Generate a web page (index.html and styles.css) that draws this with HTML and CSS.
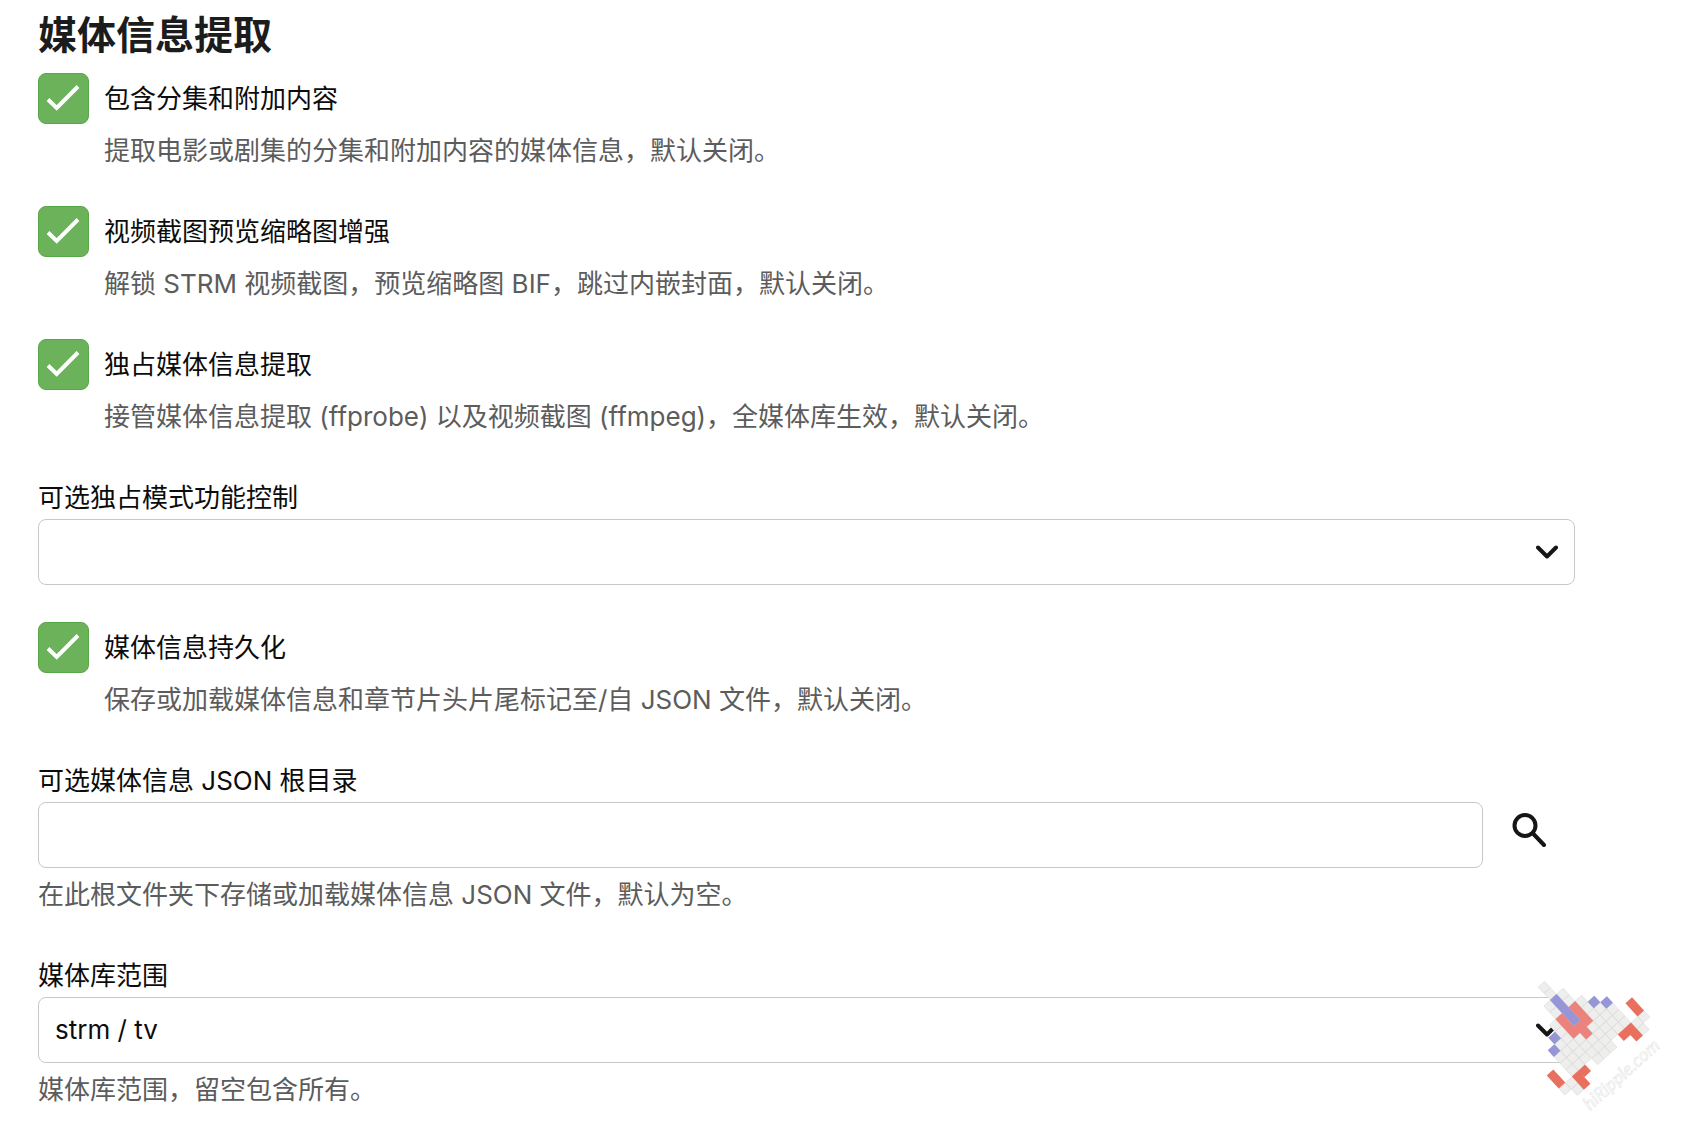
FILE: index.html
```html
<!DOCTYPE html>
<html lang="zh-CN">
<head>
<meta charset="utf-8">
<meta name="viewport" content="width=device-width, initial-scale=1">
<title>媒体信息提取</title>
<link rel="stylesheet" href="styles.css">
</head>
<body>
<main class="page">
  <form class="settings">
    <h1 class="title">媒体信息提取</h1>

    <div class="option">
      <label class="option-row">
        <span class="check">
          <input class="check-input" type="checkbox" checked aria-describedby="d1">
          <svg class="check-mark" viewBox="0 0 51 51" aria-hidden="true"><path d="M10 26.5 18.7 35 40 13.5"/></svg>
        </span>
        <span>包含分集和附加内容</span>
      </label>
      <p class="help" id="d1">提取电影或剧集的分集和附加内容的媒体信息，默认关闭。</p>
    </div>

    <div class="option">
      <label class="option-row">
        <span class="check">
          <input class="check-input" type="checkbox" checked aria-describedby="d2">
          <svg class="check-mark" viewBox="0 0 51 51" aria-hidden="true"><path d="M10 26.5 18.7 35 40 13.5"/></svg>
        </span>
        <span>视频截图预览缩略图增强</span>
      </label>
      <p class="help" id="d2">解锁 STRM 视频截图，预览缩略图 BIF，跳过内嵌封面，默认关闭。</p>
    </div>

    <div class="option">
      <label class="option-row">
        <span class="check">
          <input class="check-input" type="checkbox" checked aria-describedby="d3">
          <svg class="check-mark" viewBox="0 0 51 51" aria-hidden="true"><path d="M10 26.5 18.7 35 40 13.5"/></svg>
        </span>
        <span>独占媒体信息提取</span>
      </label>
      <p class="help" id="d3">接管媒体信息提取 (ffprobe) 以及视频截图 (ffmpeg)，全媒体库生效，默认关闭。</p>
    </div>

    <div class="field">
      <label class="field-label" for="mode">可选独占模式功能控制</label>
      <div class="select">
        <select class="control" id="mode"><option value=""></option></select>
        <svg class="chevron" viewBox="0 0 22 14" aria-hidden="true"><path d="M2 2.5 11 11.5 20 2.5"/></svg>
      </div>
    </div>

    <div class="option">
      <label class="option-row">
        <span class="check">
          <input class="check-input" type="checkbox" checked aria-describedby="d4">
          <svg class="check-mark" viewBox="0 0 51 51" aria-hidden="true"><path d="M10 26.5 18.7 35 40 13.5"/></svg>
        </span>
        <span>媒体信息持久化</span>
      </label>
      <p class="help" id="d4">保存或加载媒体信息和章节片头片尾标记至/自 JSON 文件，默认关闭。</p>
    </div>

    <div class="field">
      <label class="field-label" for="root">可选媒体信息 JSON 根目录</label>
      <div class="path">
        <input class="control" id="root" type="text" aria-describedby="d5">
        <button class="browse" type="button" aria-label="浏览">
          <svg class="browse-icon" viewBox="0 0 34 34" aria-hidden="true"><circle cx="13" cy="12.5" r="10.5"/><path d="M21 20.5 32 32"/></svg>
        </button>
      </div>
      <p class="help" id="d5">在此根文件夹下存储或加载媒体信息 JSON 文件，默认为空。</p>
    </div>

    <div class="field">
      <label class="field-label" for="scope">媒体库范围</label>
      <div class="select">
        <select class="control" id="scope" aria-describedby="d6"><option>strm / tv</option></select>
        <svg class="chevron" viewBox="0 0 22 14" aria-hidden="true"><path d="M2 2.5 11 11.5 20 2.5"/></svg>
      </div>
      <p class="help" id="d6">媒体库范围，留空包含所有。</p>
    </div>
  </form>

  <svg class="watermark" viewBox="0 0 188 176">
    <defs>
      <path id="tiles" d="M-2.5 0h11M-.5 1h9M-.5-1h9M1.5 2h6M1.5-2h6M2.5 3h5M2.5-3h5M3.5 4h4M3.5-4h4M7.5 5h2M7.5-5h2M7.5 6h1M7.5-6h1"/>
    </defs>
    <!-- one unit per tile; tile (0,0) is the first of the blue strip -->
    <g class="mark" transform="translate(56.3 40.3) rotate(47.5) scale(8.9)">
      <use class="tile-lines" href="#tiles"/>
      <use class="tile-faces" href="#tiles"/>
      <path class="tile-rose" d="M1.5 1h3M1.5-1h3M3.5 0h2"/>
      <path class="tile-red" d="M5.5 6h2M5.5-6h2M7.5 3h1M7.5-3h1M7.5 4h2M7.5-4h2"/>
      <path class="tile-blue" d="M-.5 0h4M2.5 3h1M2.5-3h1M3.5 4h1M3.5-4h1"/>
    </g>
    <text class="mark-text" transform="translate(90 151) rotate(-42)">hiRipple.com</text>
  </svg>
</main>
</body>
</html>
```
FILE: styles.css
```css
* {
  box-sizing: border-box;
}

body {
  margin: 0;
  background: #fff;
  color: #0c0c0c;
  font: 26px/36px Inter, "Noto Sans CJK SC", sans-serif;
}

.page {
  position: relative;
  padding: 5px 113px 28px 38px;
}

.settings {
  display: flex;
  flex-direction: column;
  gap: 37px;
}

.title {
  margin: 0 0 -29px;
  color: #1c1c1c;
  font-size: 39px;
  font-weight: 700;
  line-height: 60px;
}

.option-row {
  display: flex;
  align-items: center;
  gap: 15px;
}

.option .help {
  margin-left: 66px;
}

.check {
  display: grid;
  flex: none;
}

.check-input,
.check-mark {
  grid-area: 1 / 1;
  width: 51px;
  height: 51px;
  margin: 0;
}

.check-input {
  appearance: none;
  border: 1px solid #58a846;
  border-radius: 8px;
  background: #6bb25a;
}

.check-mark {
  fill: none;
  stroke: #fff;
  stroke-width: 4;
  pointer-events: none;
}

.help {
  margin: 9px 0 0;
  color: #5c5c5c;
}

.field-label {
  display: block;
  padding: 8px 0 3px;
}

.select {
  display: grid;
  align-items: center;
}

.select .control,
.chevron {
  grid-area: 1 / 1;
}

.control {
  appearance: none;
  width: 100%;
  height: 66px;
  padding: 0 16px;
  border: 1px solid #c8c8c8;
  border-radius: 8px;
  background: #fff;
  color: inherit;
  font: inherit;
}

.chevron {
  justify-self: end;
  width: 22px;
  height: 14px;
  margin-right: 17px;
  fill: none;
  stroke: #161616;
  stroke-width: 4;
  stroke-linecap: round;
  stroke-linejoin: round;
  pointer-events: none;
}

.path {
  display: flex;
  align-items: flex-start;
}

.path .control {
  flex: 1;
  min-width: 0;
}

.browse {
  display: grid;
  place-items: center;
  width: 92px;
  height: 55px;
  padding: 0;
  border: 0;
  background: none;
}

.browse-icon {
  width: 34px;
  height: 34px;
  fill: none;
  stroke: #161616;
  stroke-width: 4;
  stroke-linecap: round;
}

.watermark {
  position: absolute;
  right: 0;
  bottom: 0;
  width: 188px;
  height: 176px;
  pointer-events: none;
}

.mark {
  fill: none;
  stroke-width: 1;
}

.tile-lines {
  stroke: #dcdcdc;
}

.tile-faces {
  stroke: #eeeeec;
  stroke-width: 0.9;
  stroke-dasharray: 0.9 0.1;
  stroke-dashoffset: -0.05;
}

.tile-rose {
  stroke: #eb827c;
}

.tile-red {
  stroke: #e96f5e;
}

.tile-blue {
  stroke: #9695d6;
}

.mark-text {
  fill: #fff;
  stroke: #dedede;
  stroke-width: 0.5;
  font: italic 18px Lato, sans-serif;
}
```
